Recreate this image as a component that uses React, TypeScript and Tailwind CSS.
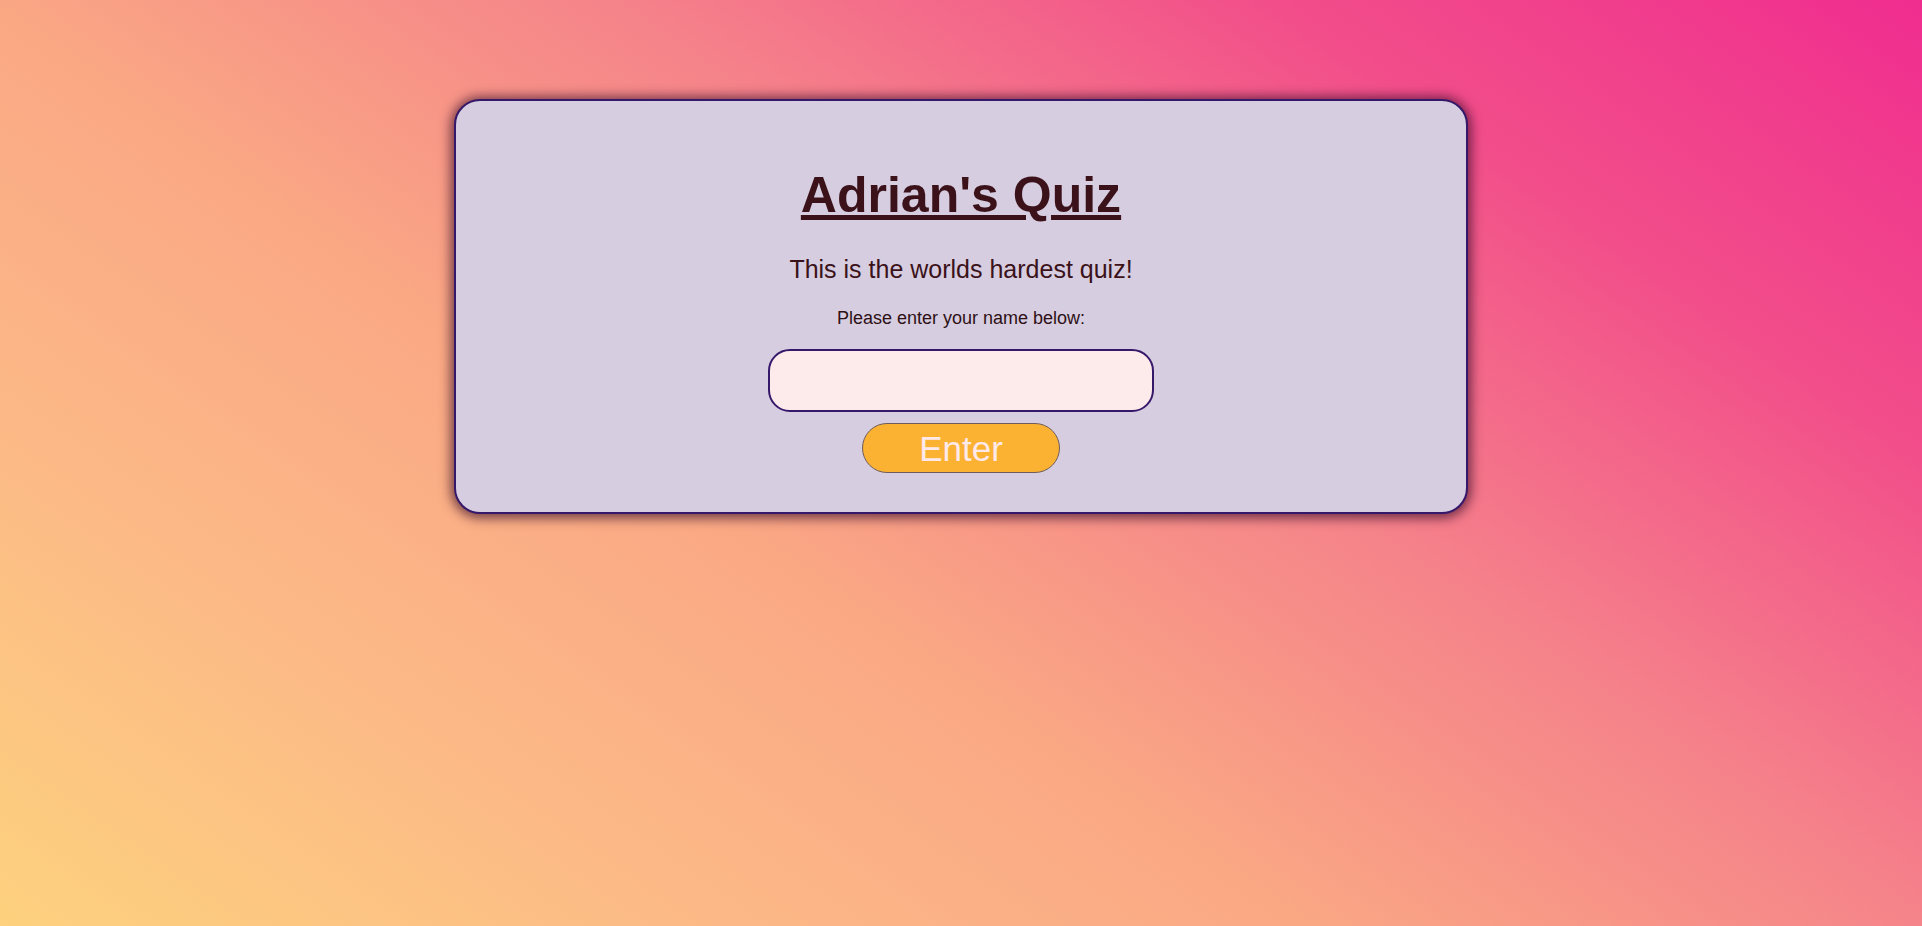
import { useState } from 'react';

export default function App() {
  const [name, setName] = useState('');

  return (
    <div className="min-h-screen w-full bg-[linear-gradient(35deg,#fdd17e_0%,#fcb887_23%,#faa884_40%,#f5828a_60%,#f24e8a_80%,#f02d8f_100%)] font-['Liberation_Sans',Arial,sans-serif]">
      <div className="flex justify-center pt-[99px]">
        {/* Quiz card */}
        <div className="w-[1014px] flex flex-col items-center rounded-[26px] border-2 border-[#35186a] bg-[#d6cde0] pt-[65px] pb-[39px] shadow-[0_1px_12px_3px_rgba(50,10,40,0.7)]">
          <h1 className="text-[50px] leading-[58px] font-bold text-[#3b1219] underline">
            Adrian's Quiz
          </h1>
          <p className="mt-[31px] text-[25px] leading-[29px] text-[#3b1219]">
            This is the worlds hardest quiz!
          </p>
          <p className="mt-[24px] text-[18px] leading-[21px] text-[#2e1015]">
            Please enter your name below:
          </p>
          <input
            type="text"
            value={name}
            onChange={(e) => setName(e.target.value)}
            className="mt-[20px] w-[386px] h-[63px] rounded-[22px] border-2 border-[#35186a] bg-[#fdeaea] px-4 text-[20px] outline-none"
          />
          <button className="mt-[11px] w-[198px] h-[50px] rounded-full border-[1.5px] border-[#6e5c5c] bg-[#fbb232] text-[35px] leading-none text-[#fde9ea]">
            Enter
          </button>
        </div>
      </div>
    </div>
  );
}
